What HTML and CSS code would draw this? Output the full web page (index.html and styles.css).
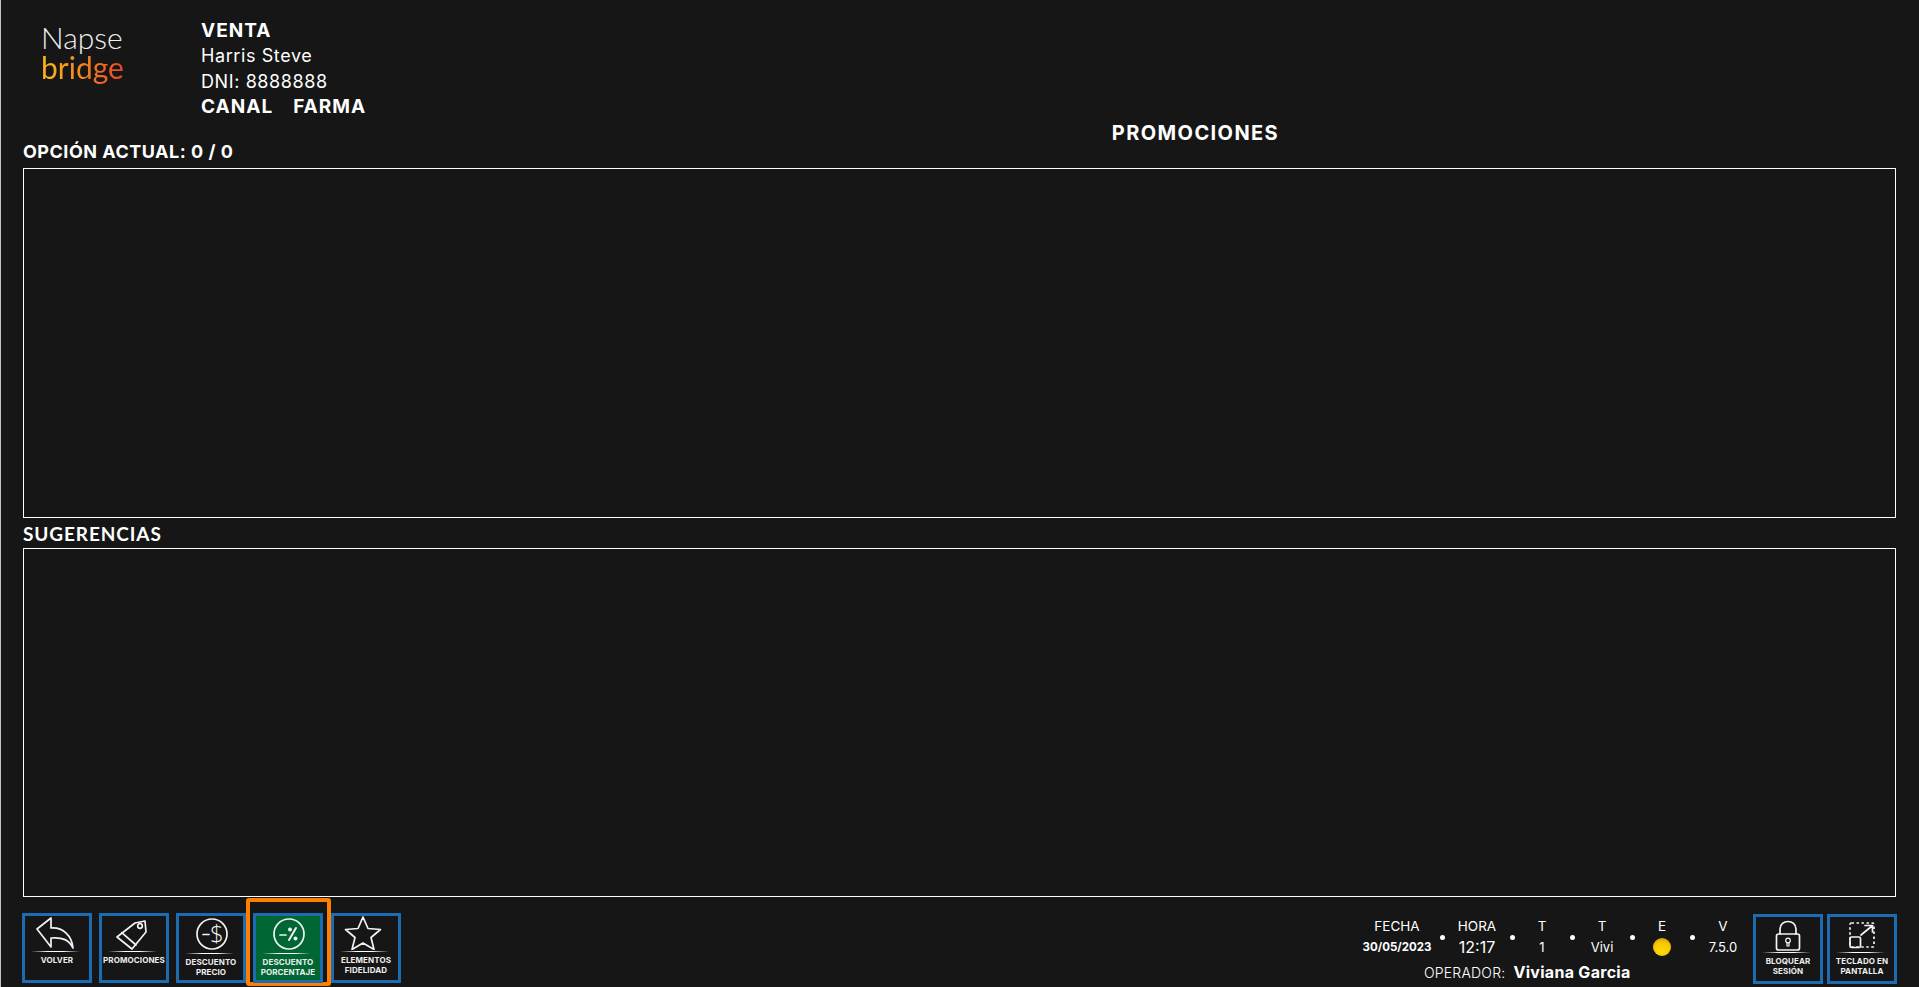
FILE: index.html
```html
<!DOCTYPE html>
<html lang="es">
<head>
<meta charset="utf-8">
<title>Promociones</title>
<link rel="stylesheet" href="styles.css">
</head>
<body>
<div class="app">
  <header class="header">
    <div class="logo">
      <div class="logo-top">Napse</div>
      <div class="logo-bottom">bridge</div>
    </div>
    <div class="client">
      <div class="client-strong">VENTA</div>
      <div class="client-line">Harris Steve</div>
      <div class="client-line">DNI: 8888888</div>
      <div class="client-strong channel"><span>CANAL</span><span>FARMA</span></div>
    </div>
  </header>
  <div class="title-row"><h1 class="title">PROMOCIONES</h1></div>
  <div class="option-label">OPCIÓN ACTUAL: 0 / 0</div>
  <div class="panel"></div>
  <div class="suggest-label">SUGERENCIAS</div>
  <div class="panel panel-b"></div>
  <footer class="footer">
    <div class="actions">
      <button class="btn">
        <svg class="ico" viewBox="0 0 44 34"><path d="M2 13 16 2V12C28 11 37 20 38 32 34 24 28 21 16 22V31Z"/></svg>
        <span class="rule"></span><span class="lbl">VOLVER</span>
      </button>
      <button class="btn">
        <svg class="ico" viewBox="0 0 44 34"><path d="M23 7 33 5 34 16 20 33 5 21Z"/><path d="M9.7 16.700 24 29"/><circle cx="28" cy="10" r="2.300"/></svg>
        <span class="rule"></span><span class="lbl">PROMOCIONES</span>
      </button>
      <button class="btn btn-low">
        <svg class="ico" viewBox="0 0 44 34"><circle cx="23" cy="18" r="15"/><path d="M14 18.500H20"/><text class="ico-text" x="21" y="26">$</text></svg>
        <span class="rule"></span><span class="lbl">DESCUENTO PRECIO</span>
      </button>
      <div class="highlight">
        <button class="btn btn-low btn-active">
          <svg class="ico" viewBox="0 0 44 34"><circle cx="23" cy="18" r="15"/><path d="M14 19H20"/><path class="bold" d="M30 12 23 24"/><circle class="fill" cx="24" cy="13.500" r="2"/><circle class="fill" cx="29.500" cy="22.500" r="2"/></svg>
          <span class="rule"></span><span class="lbl">DESCUENTO PORCENTAJE</span>
        </button>
      </div>
      <button class="btn">
        <svg class="ico" viewBox="0 0 44 34"><path d="M19 1 24 12.500 36.500 13.500 27 21.500 30 33.500 19 27 8 33.500 11 21.500 1.500 13.500 14 12.500Z"/></svg>
        <span class="rule"></span><span class="lbl">ELEMENTOS FIDELIDAD</span>
      </button>
    </div>
    <div class="right">
      <div class="status">
        <div class="status-row">
          <div class="cell w70"><span class="cap">FECHA</span><span class="val date">30/05/2023</span></div>
          <i class="dot"></i>
          <div class="cell w50"><span class="cap">HORA</span><span class="val time">12:17</span></div>
          <i class="dot"></i>
          <div class="cell w40"><span class="cap">T</span><span class="val">1</span></div>
          <i class="dot"></i>
          <div class="cell w40"><span class="cap">T</span><span class="val">Vivi</span></div>
          <i class="dot"></i>
          <div class="cell w40"><span class="cap">E</span><span class="ball"></span></div>
          <i class="dot"></i>
          <div class="cell w42"><span class="cap">V</span><span class="val">7.5.0</span></div>
        </div>
        <div class="operator"><span class="op-cap">OPERADOR:</span><span class="op-name">Viviana Garcia</span></div>
      </div>
      <div class="actions actions-right">
        <button class="btn">
          <svg class="ico" viewBox="0 0 44 34"><path d="M14 17V12C14 2 30 2 30 12V17"/><rect x="10.500" y="17" width="23" height="16" rx="2"/><circle class="thin" cx="22" cy="23.500" r="2.300"/><path class="thin" d="M21 25.500V29H23V25.500"/></svg>
          <span class="rule"></span><span class="lbl">BLOQUEAR SESIÓN</span>
        </button>
        <button class="btn btn-gap">
          <svg class="ico" viewBox="0 0 44 34"><rect class="dash" x="10" y="6" width="24" height="24" rx="1.500"/><rect x="10" y="20" width="10.500" height="10.500" rx="1.500"/><path d="M21 18 32 9M25 8.500H32.500V15"/></svg>
          <span class="rule"></span><span class="lbl">TECLADO EN PANTALLA</span>
        </button>
      </div>
    </div>
  </footer>
</div>
</body>
</html>
```
FILE: styles.css
```css
* { box-sizing: border-box; }
html, body { margin: 0; height: 100%; background: #161616; }
body { font-family: Inter, "Open Sans", sans-serif; color: #fff; overflow: hidden; }
.app { height: 987px; overflow: hidden; border-left: 1px solid #c4c4c4; padding: 0 23px 0 22px; display: flex; flex-direction: column; background: #161616; }

.header { height: 118px; flex: none; display: flex; padding-top: 18px; }
.logo { width: 178px; padding: 4px 0 0 18px; font-family: Lato, sans-serif; font-size: 30px; line-height: 30px; font-weight: 300; }
.logo-top { color: #f0f0f0; }
.logo-bottom { width: 84px; padding-bottom: 10px; background: linear-gradient(90deg, #fdb813 0%, #f78a1d 45%, #e8452c 100%); -webkit-background-clip: text; background-clip: text; color: transparent; font-weight: 400; }
.client { font-size: 18px; line-height: 25.300px; }
.client-strong { font-size: 19px; font-weight: 700; letter-spacing: 1px; }
.client-line { letter-spacing: 0.6px; }
.channel { display: flex; gap: 20px; }

.title-row { height: 24px; flex: none; padding: 3px 0 0 472px; }
.title { margin: 0; text-align: center; font-size: 20px; line-height: 24px; font-weight: 700; letter-spacing: 1.400px; }
.option-label { height: 26px; flex: none; font-size: 18px; line-height: 20px; font-weight: 700; letter-spacing: 0.5px; }
.panel { height: 350px; border: 1px solid #fff; flex: none; }
.panel-b { height: 349px; }
.suggest-label { height: 30px; flex: none; padding-top: 5px; font-family: Lato, sans-serif; font-size: 19px; line-height: 21px; font-weight: 700; letter-spacing: 0.9px; }

.footer { height: 89px; flex: none; margin: 1px -1px 0 -1px; display: flex; justify-content: space-between; }
.actions { display: flex; align-items: flex-start; gap: 7px; padding-top: 15px; }
.actions-right { gap: 4px; padding-top: 16px; }
.btn { width: 70px; height: 70px; flex: none; padding: 0; background: #161616; border: 3px solid #1b6cb2; color: #fff; display: flex; flex-direction: column; align-items: center; font-family: Inter, sans-serif; cursor: pointer; }
.ico { width: 44px; height: 34px; flex: none; fill: none; stroke: #f2f2f2; stroke-width: 1.7; stroke-linejoin: round; stroke-linecap: round; }
.ico .fill { fill: #f2f2f2; stroke: none; }
.ico .bold { stroke-width: 2; }
.ico .thin { stroke-width: 1.2; }
.ico .dash { stroke-dasharray: 2.500 2.500; stroke-linecap: butt; }
.ico-text { fill: #f2f2f2; stroke: none; font-family: "Open Sans", sans-serif; font-weight: 300; font-size: 24px; }
.rule { width: 49px; height: 1px; flex: none; margin: 1px 0 0 -3px; background: linear-gradient(90deg, rgba(255,255,255,0), #fff 35%, #fff 65%, rgba(255,255,255,0)); }
.btn-low .rule { margin-top: 3px; }
.lbl { margin-top: 3px; font-size: 8px; line-height: 10px; font-weight: 700; text-align: center; letter-spacing: 0.1px; color: #eee; width: 64px; }
.highlight { width: 85px; height: 88px; margin: -15px -7px 0; padding: 11px 3px 0; border: 4px solid #ff8000; border-radius: 3px; flex: none; }
.btn-active { background: #006633; }

.right { display: flex; }
.status { width: 382px; margin-right: 9px; padding-top: 19px; }
.status-row { display: flex; align-items: center; height: 41px; }
.cell { display: flex; flex-direction: column; align-items: center; flex: none; }
.w70 { width: 70px; } .w50 { width: 50px; } .w40 { width: 40px; } .w42 { width: 42px; }
.cap { font-size: 13.500px; line-height: 18px; }
.val { font-size: 13px; line-height: 22px; margin-top: 1px; }
.date { font-size: 11.500px; font-weight: 700; }
.time { font-size: 16px; }
.ball { width: 18px; height: 18px; margin: 3px 0 2px; border-radius: 50%; background: radial-gradient(circle at 50% 72%, #ffdc00 0%, #f9c400 55%, #c78d00 100%); }
.dot { width: 5px; height: 5px; margin: 0 7.500px; flex: none; border-radius: 50%; background: #fff; }
.operator { display: flex; align-items: baseline; gap: 8px; padding: 4px 0 0 62px; line-height: 20px; }
.op-cap { font-size: 14px; font-weight: 300; letter-spacing: 0.2px; }
.op-name { font-size: 16px; font-weight: 700; letter-spacing: 0.3px; }
```
